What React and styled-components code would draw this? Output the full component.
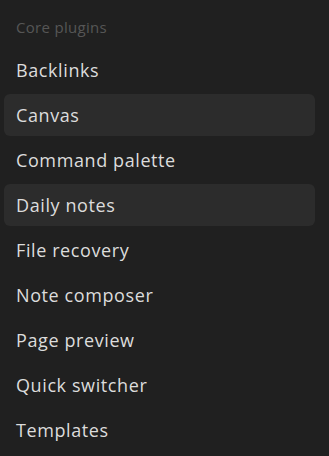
import React from "react";
import styled, { createGlobalStyle } from "styled-components";

const Global = createGlobalStyle`
  html, body {
    margin: 0;
    background: #202020;
  }
  body {
    font-family: "Open Sans", "Noto Sans", sans-serif;
  }
`;

const plugins = [
  { name: "Backlinks" },
  { name: "Canvas", active: true },
  { name: "Command palette" },
  { name: "Daily notes", active: true },
  { name: "File recovery" },
  { name: "Note composer" },
  { name: "Page preview" },
  { name: "Quick switcher" },
  { name: "Templates" },
];

const App = () => {
  return (
    <Panel>
      <Global />
      <Heading>Core plugins</Heading>
      <List>
        {plugins.map(p => (
          <Item key={p.name} $active={p.active}>
            {p.name}
          </Item>
        ))}
      </List>
    </Panel>
  );
};

const Panel = styled.div`
  width: 329px;
  height: 456px;
  background: #202020;
  padding: 0 14px 0 4px;
  box-sizing: border-box;
  overflow: hidden;
`;

const Heading = styled.div`
  height: 49px;
  padding: 4px 12px 0;
  box-sizing: border-box;
  display: flex;
  align-items: center;
  font-size: 15px;
  letter-spacing: 0.3px;
  color: #565656;
`;

const List = styled.div`
  display: flex;
  flex-direction: column;
  gap: 3px;
`;

const Item = styled.div`
  height: 42px;
  display: flex;
  align-items: center;
  padding: 0 12px;
  border-radius: 6px;
  font-size: 18px;
  letter-spacing: 0.6px;
  color: #dcdcdc;
  background: ${p => (p.$active ? "#2c2c2c" : "transparent")};
`;

export default App;
